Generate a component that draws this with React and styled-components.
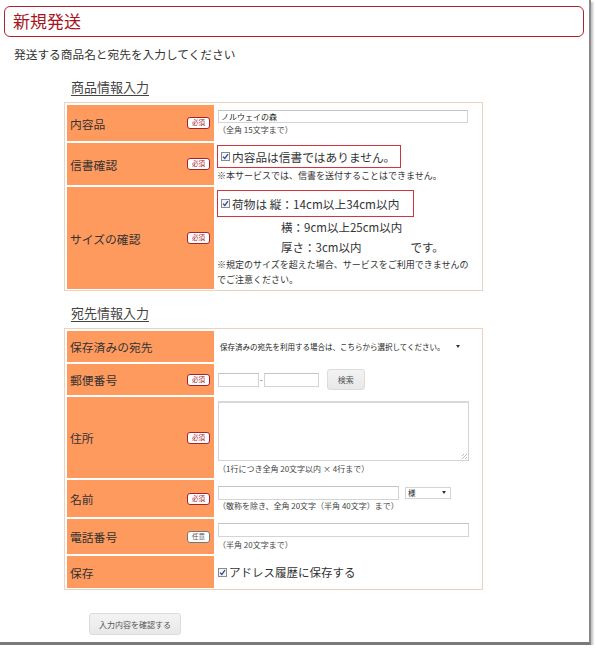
import React from "react";
import styled, { createGlobalStyle } from "styled-components";

const GlobalStyle = createGlobalStyle`
  html, body {
    margin: 0;
    padding: 0;
    background: #fff;
  }
  body {
    font-family: "Noto Sans CJK JP", "Noto Sans", sans-serif;
    color: #333;
  }
`;

const Page = styled.div`
  box-sizing: border-box;
  width: 591px;
  height: 645px;
  background: #fff;
  border-right: 2px solid #8a8a8a;
  border-bottom: 3px solid #7a7a7a;
  box-shadow: 2px 2px 2px rgba(0, 0, 0, 0.25);
  padding: 6px 0 0 4px;
  overflow: hidden;
`;

const TitleBox = styled.h1`
  box-sizing: border-box;
  margin: 0;
  width: 580px;
  height: 31px;
  border: 1.5px solid #b0222b;
  border-radius: 6px;
  padding-left: 8px;
  font-size: 17px;
  font-weight: 400;
  line-height: 28px;
  color: #a8141d;
`;

const Lead = styled.p`
  margin: 8px 0 0 10px;
  font-size: 11.7px;
  line-height: 18px;
  color: #333;
`;

const SectionHeading = styled.h2`
  margin: ${(p) => p.$top}px 0 0 67px;
  font-size: 13px;
  font-weight: 400;
  line-height: 18px;
  color: #444;
  text-decoration: underline;
  text-underline-offset: 3px;
`;

const Table = styled.div`
  box-sizing: border-box;
  margin: ${(p) => p.$top}px 0 0 60px;
  width: 419px;
  border: 1px solid #ecd3c1;
  padding: 2px 2px 1px 2px;
  display: grid;
  grid-template-columns: 147px 1fr;
  row-gap: 2px;
`;

const Label = styled.div`
  background: #ff9a5f;
  height: ${(p) => p.$h}px;
  display: flex;
  align-items: center;
  justify-content: space-between;
  padding: 0 4px 0 3px;
  font-size: 11.8px;
  color: #333;
`;

const Badge = styled.span`
  box-sizing: border-box;
  width: 23px;
  height: 12px;
  border: 1.5px solid ${(p) => (p.$optional ? "#777" : "#a5232b")};
  border-radius: 3px;
  background: #fff;
  font-size: 6.5px;
  line-height: 9px;
  text-align: center;
  color: ${(p) => (p.$optional ? "#555" : "#a5232b")};
`;

const Cell = styled.div`
  display: flex;
  flex-direction: column;
  justify-content: center;
  padding-left: ${(p) => p.$pl ?? 4}px;
  height: ${(p) => p.$h}px;
  white-space: nowrap;
`;

const TextInput = styled.div`
  box-sizing: border-box;
  width: ${(p) => p.$w}px;
  height: ${(p) => p.$h || 14}px;
  border: 1px solid #d4d4d4;
  border-top-color: #c4c4c4;
  background: #fff;
  font-size: 8px;
  line-height: 12px;
  padding-left: 2px;
  color: #222;
`;

const Note = styled.div`
  font-size: 8px;
  line-height: 12px;
  color: #444;
  margin-top: ${(p) => p.$mt || 0}px;
`;

const SmallNote = styled.div`
  font-size: 9px;
  line-height: 15px;
  color: #333;
`;

const RedBox = styled.div`
  box-sizing: border-box;
  width: ${(p) => p.$w}px;
  height: ${(p) => p.$h}px;
  border: 1.5px solid #d1343c;
  display: flex;
  align-items: center;
  padding-left: 3px;
  font-size: 11.7px;
  color: #333;
`;

const CheckLine = styled.div`
  display: flex;
  align-items: center;
  font-size: 11.5px;
  color: #333;
`;

const Box = styled.span`
  box-sizing: border-box;
  flex: none;
  width: 9px;
  height: 9px;
  border: 1px solid #8a8a8a;
  background: #f4f4f4;
  margin-right: 2px;
  display: inline-flex;
  align-items: center;
  justify-content: center;
`;

const SizeLine = styled.div`
  font-size: 11.5px;
  line-height: 20px;
  color: #333;
  margin-left: ${(p) => p.$ml || 0}px;
`;

const Tail = styled.span`
  margin-left: ${(p) => p.$ml}px;
`;

const Row = styled.div`
  display: flex;
  align-items: center;
  gap: ${(p) => p.$gap || 0}px;
`;

const Select = styled.div`
  box-sizing: border-box;
  width: ${(p) => p.$w}px;
  height: ${(p) => p.$h || 13}px;
  display: flex;
  align-items: center;
  justify-content: space-between;
  padding: 0 4px 0 2px;
  font-size: 7.5px;
  color: #222;
  border: ${(p) => (p.$bordered ? "1px solid #d4d4d4" : "none")};
  background: #fff;
`;

const Caret = styled.span`
  width: 0;
  height: 0;
  border-left: 2.5px solid transparent;
  border-right: 2.5px solid transparent;
  border-top: 3px solid #333;
`;

const GreyButton = styled.div`
  box-sizing: border-box;
  width: ${(p) => p.$w}px;
  height: ${(p) => p.$h}px;
  margin-left: ${(p) => p.$ml || 0}px;
  border: 1px solid #dcdcdc;
  border-radius: 3px;
  background: linear-gradient(#f3f3f3, #e8e8e8);
  display: flex;
  align-items: center;
  justify-content: center;
  font-size: 8px;
  color: #555;
`;

const Dash = styled.span`
  font-size: 8px;
  color: #444;
  margin: 0 1px;
`;

const TextArea = styled.div`
  box-sizing: border-box;
  width: 251px;
  height: 60px;
  border: 1px solid #d4d4d4;
  border-top: 2px solid #d8d8d8;
  background: #fff;
  position: relative;
`;

const Grip = styled.span`
  position: absolute;
  right: 1px;
  bottom: 1px;
  width: 5px;
  height: 5px;
  background: repeating-linear-gradient(135deg, transparent 0 1px, #bbb 1px 2px);
`;

const Footer = styled.div`
  margin: 23px 0 0 85px;
`;

function Check() {
  return (
    <Box>
      <svg width="7" height="7" viewBox="0 0 7 7">
        <path d="M1 3.6 L2.8 5.4 L6 1.2" fill="none" stroke="#2b4d9a" strokeWidth="1.3" />
      </svg>
    </Box>
  );
}

export default function App() {
  return (
    <>
      <GlobalStyle />
      <Page>
        <TitleBox>新規発送</TitleBox>
        <Lead>発送する商品名と宛先を入力してください</Lead>

        <SectionHeading $top={15}>商品情報入力</SectionHeading>
        <Table $top={6}>
          <Label $h={36}>
            内容品<Badge>必須</Badge>
          </Label>
          <Cell $h={36}>
            <TextInput $w={250} $h={13}>ノルウェイの森</TextInput>
            <Note $mt={1}>（全角 15文字まで）</Note>
          </Cell>

          <Label $h={42}>
            信書確認<Badge>必須</Badge>
          </Label>
          <Cell $h={42} $pl={3}>
            <RedBox $w={184} $h={23}>
              <Check />
              内容品は信書ではありません。
            </RedBox>
            <SmallNote>※本サービスでは、信書を送付することはできません。</SmallNote>
          </Cell>

          <Label $h={102}>
            サイズの確認<Badge>必須</Badge>
          </Label>
          <Cell $h={102} $pl={3}>
            <RedBox $w={197} $h={27}>
              <Check />
              荷物は 縦：14cm以上34cm以内
            </RedBox>
            <SizeLine $ml={64}>横：9cm以上25cm以内</SizeLine>
            <SizeLine $ml={64}>
              厚さ：3cm以内<Tail $ml={49}>です。</Tail>
            </SizeLine>
            <SmallNote>
              ※規定のサイズを超えた場合、サービスをご利用できませんの
              <br />
              でご注意ください。
            </SmallNote>
          </Cell>
        </Table>

        <SectionHeading $top={13}>宛先情報入力</SectionHeading>
        <Table $top={6}>
          <Label $h={31}>保存済みの宛先</Label>
          <Cell $h={31}>
            <Select $w={246}>
              保存済みの宛先を利用する場合は、こちらから選択してください。
              <Caret />
            </Select>
          </Cell>

          <Label $h={31}>
            郵便番号<Badge>必須</Badge>
          </Label>
          <Cell $h={31}>
            <Row>
              <TextInput $w={41} />
              <Dash>-</Dash>
              <TextInput $w={55} />
              <GreyButton $w={38} $h={21} $ml={8}>
                検索
              </GreyButton>
            </Row>
          </Cell>

          <Label $h={81}>
            住所<Badge>必須</Badge>
          </Label>
          <Cell $h={81}>
            <TextArea>
              <Grip />
            </TextArea>
            <Note $mt={2}>（1行につき全角 20文字以内 × 4行まで）</Note>
          </Cell>

          <Label $h={37}>
            名前<Badge>必須</Badge>
          </Label>
          <Cell $h={37}>
            <Row $gap={6}>
              <TextInput $w={181} />
              <Select $w={46} $h={12} $bordered>
                様
                <Caret />
              </Select>
            </Row>
            <Note>（敬称を除き、全角 20文字（半角 40文字）まで）</Note>
          </Cell>

          <Label $h={35}>
            電話番号<Badge $optional>任意</Badge>
          </Label>
          <Cell $h={35}>
            <TextInput $w={251} />
            <Note $mt={2}>（半角 20文字まで）</Note>
          </Cell>

          <Label $h={32}>保存</Label>
          <Cell $h={32}>
            <CheckLine>
              <Check />
              アドレス履歴に保存する
            </CheckLine>
          </Cell>
        </Table>

        <Footer>
          <GreyButton $w={92} $h={22}>
            入力内容を確認する
          </GreyButton>
        </Footer>
      </Page>
    </>
  );
}
